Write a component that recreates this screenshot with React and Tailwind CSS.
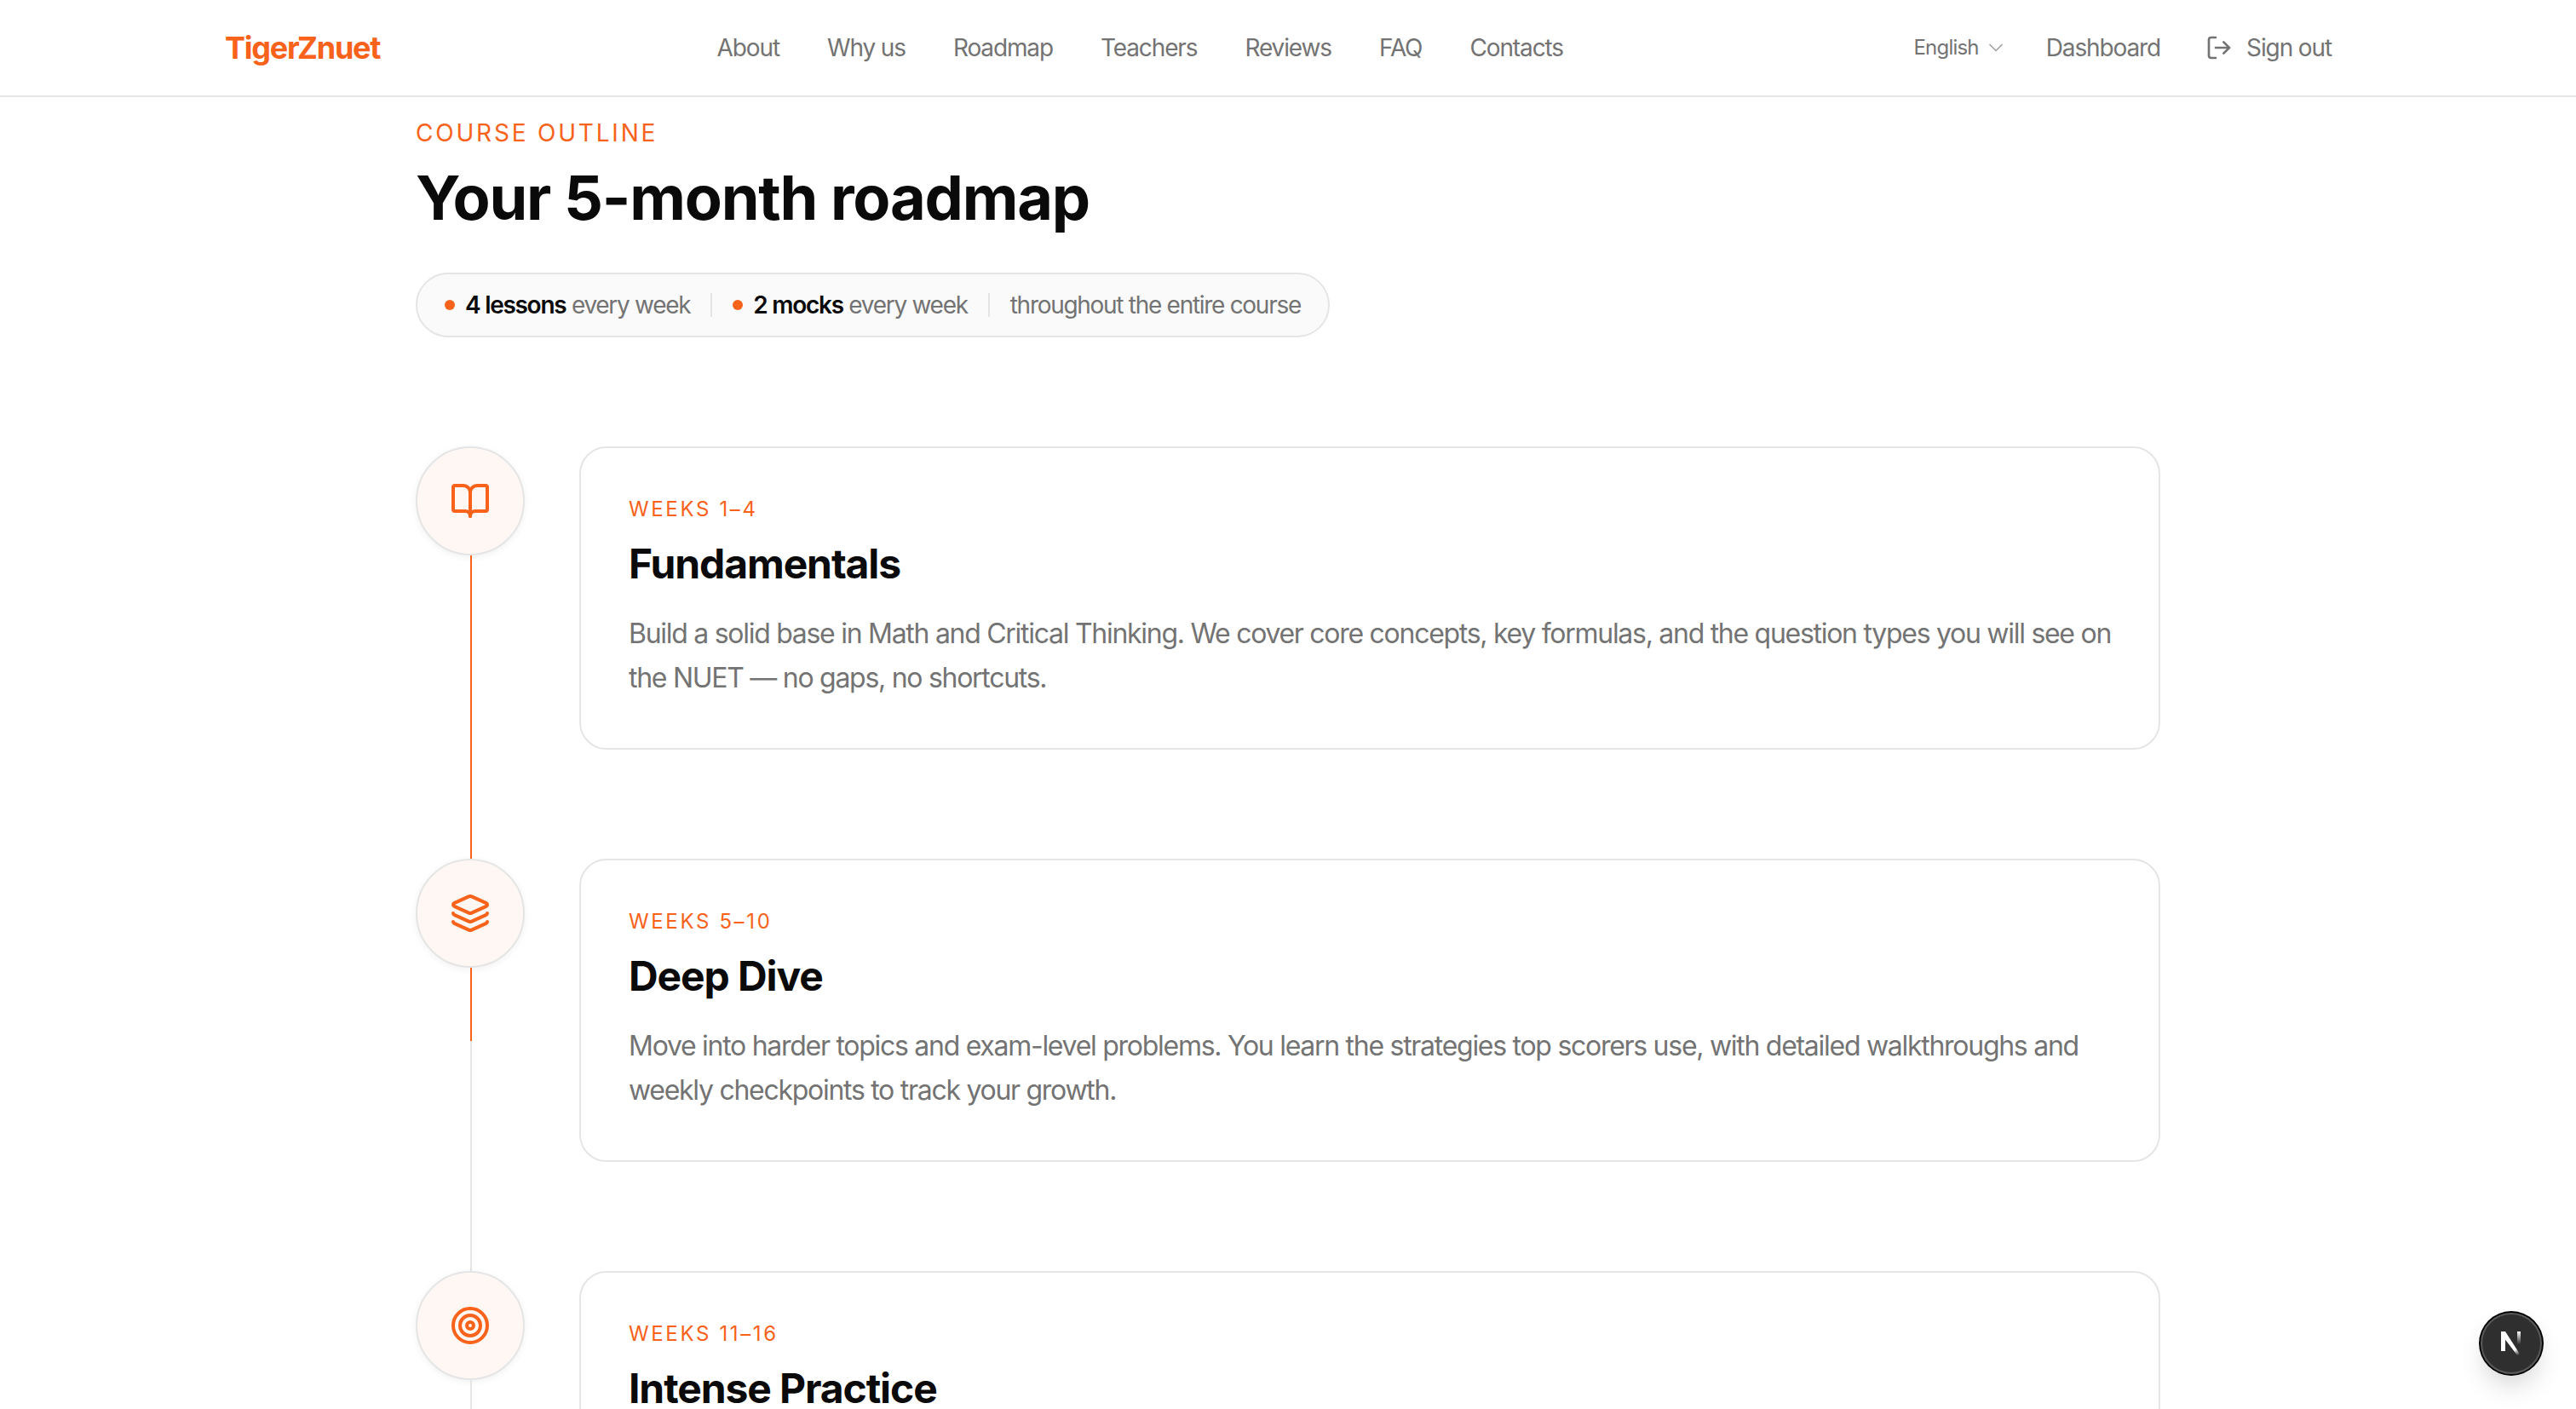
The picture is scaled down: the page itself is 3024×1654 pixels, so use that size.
import { BookOpen, Layers, Target, ChevronDown, LogOut } from 'lucide-react'

const NAV_LINKS = ['About', 'Why us', 'Roadmap', 'Teachers', 'Reviews', 'FAQ', 'Contacts']

const STAGES = [
  {
    weeks: 'WEEKS 1–4',
    title: 'Fundamentals',
    text: 'Build a solid base in Math and Critical Thinking. We cover core concepts, key formulas, and the question types you will see on the NUET — no gaps, no shortcuts.',
    Icon: BookOpen,
    fill: 'h-full',
  },
  {
    weeks: 'WEEKS 5–10',
    title: 'Deep Dive',
    text: 'Move into harder topics and exam-level problems. You learn the strategies top scorers use, with detailed walkthroughs and weekly checkpoints to track your growth.',
    Icon: Layers,
    fill: 'h-[86px]',
  },
  {
    weeks: 'WEEKS 11–16',
    title: 'Intense Practice',
    text: 'Full-length timed mocks every week, followed by a detailed review of your mistakes so that each attempt lifts your score.',
    Icon: Target,
    fill: 'h-0',
  },
]

function Header() {
  return (
    <header className="h-[114px] shrink-0 border-b-2 border-[#e5e5e5] bg-white">
      <div className="h-full mx-auto w-[2560px] pl-8 pr-[55px] flex items-center justify-between">
        <span className="w-[182px] text-[36px] font-bold tracking-[-0.035em] text-[#f8621a]">TigerZnuet</span>
        <nav className="flex items-center gap-[56px] mr-[16px] text-[28px] tracking-[-0.04em] text-[#737373]">
          {NAV_LINKS.map(link => (
            <a key={link}>{link}</a>
          ))}
        </nav>
        <div className="flex items-center text-[28px] tracking-[-0.04em] text-[#737373]">
          <span className="text-[24px] tracking-[-0.033em]">English</span>
          <ChevronDown size={28} strokeWidth={1.5} className="ml-[6px] text-[#a3a3a3]" />
          <span className="ml-[45px]">Dashboard</span>
          <LogOut size={32} strokeWidth={2} className="ml-[53px]" />
          <span className="ml-[16px]">Sign out</span>
        </div>
      </div>
    </header>
  )
}

function Stage({ stage }) {
  const { weeks, title, text, Icon, fill } = stage
  return (
    <div className="flex gap-[64px] pb-[128px]">
      <div className="relative w-[128px] shrink-0 flex flex-col items-center mb-[-128px]">
        <div className="w-[128px] h-[128px] shrink-0 rounded-full border-2 border-[#e5e5e5] bg-[#fff7f3] shadow-[0_2px_8px_rgba(0,0,0,0.06)] flex items-center justify-center">
          <Icon size={48} strokeWidth={2} className="text-[#f8621a]" />
        </div>
        <div className="w-[2px] ml-[2px] flex-1 bg-[#e5e5e5]">
          <div className={`w-full bg-[#f8621a] ${fill}`} />
        </div>
      </div>
      <div className="flex-1 rounded-[32px] border-2 border-[#e5e5e5] bg-white p-[56px]">
        <div className="text-[24px] leading-[32px] tracking-[0.11em] text-[#f8621a]">{weeks}</div>
        <h3 className="mt-[16px] text-[48px] leading-[64px] font-bold tracking-[-0.023em] text-[#0a0a0a]">{title}</h3>
        <p className="mt-[24px] text-[32px] leading-[52px] tracking-[-0.04em] text-[#737373]">{text}</p>
      </div>
    </div>
  )
}

export default function App() {
  return (
    <div className="relative h-screen overflow-hidden bg-white font-['Inter',sans-serif]">
      <Header />
      <main className="mx-auto w-[2048px] pt-[22px]">
        <div className="text-[28px] leading-[40px] tracking-[0.1em] text-[#f8621a]">COURSE OUTLINE</div>
        <h2 className="mt-[16px] text-[72px] leading-[80px] font-bold tracking-[-0.017em] text-[#0a0a0a]">Your 5-month roadmap</h2>
        <div className="mt-[48px] h-[76px] w-fit rounded-full border-2 border-[#e5e5e5] bg-[#fafafa] px-[32px] flex items-center text-[28px] tracking-[-0.046em] text-[#737373]">
          <span className="w-[12px] h-[12px] rounded-full bg-[#f8621a]" />
          <span className="ml-[12px]"><b className="font-semibold text-[#0a0a0a]">4 lessons</b> every week</span>
          <span className="w-[2px] h-[28px] mx-[24px] bg-[#e5e5e5]" />
          <span className="w-[12px] h-[12px] rounded-full bg-[#f8621a]" />
          <span className="ml-[12px]"><b className="font-semibold text-[#0a0a0a]">2 mocks</b> every week</span>
          <span className="w-[2px] h-[28px] mx-[24px] bg-[#e5e5e5]" />
          <span>throughout the entire course</span>
        </div>
        <div className="mt-[128px]">
          {STAGES.map(stage => (
            <Stage key={stage.title} stage={stage} />
          ))}
        </div>
      </main>

      {/* dev indicator */}
      <div className="absolute right-[38px] bottom-[39px] w-[76px] h-[76px] rounded-full bg-black p-[2px] shadow-[0_16px_32px_-8px_rgba(0,0,0,0.2)]">
        <div className="w-full h-full rounded-full border-2 border-[#5a5a5a] bg-[#2f2f2f] flex items-center justify-center">
          <svg width="28" height="30" viewBox="0 0 28 30" fill="none">
            <defs>
              <linearGradient id="nDiag" x1="10" y1="6" x2="24" y2="28" gradientUnits="userSpaceOnUse">
                <stop stopColor="#ffffff" />
                <stop offset="0.7" stopColor="#ffffff" />
                <stop offset="1" stopColor="#ffffff" stopOpacity="0" />
              </linearGradient>
              <linearGradient id="nBar" x1="22" y1="1" x2="22" y2="16" gradientUnits="userSpaceOnUse">
                <stop stopColor="#ffffff" />
                <stop offset="1" stopColor="#ffffff" stopOpacity="0" />
              </linearGradient>
            </defs>
            <rect x="2" y="1" width="5" height="23" fill="#ffffff" />
            <path d="M2 1H7L25 29H21L2 4Z" fill="url(#nDiag)" />
            <rect x="21" y="1" width="4" height="16" fill="url(#nBar)" />
          </svg>
        </div>
      </div>
    </div>
  )
}
